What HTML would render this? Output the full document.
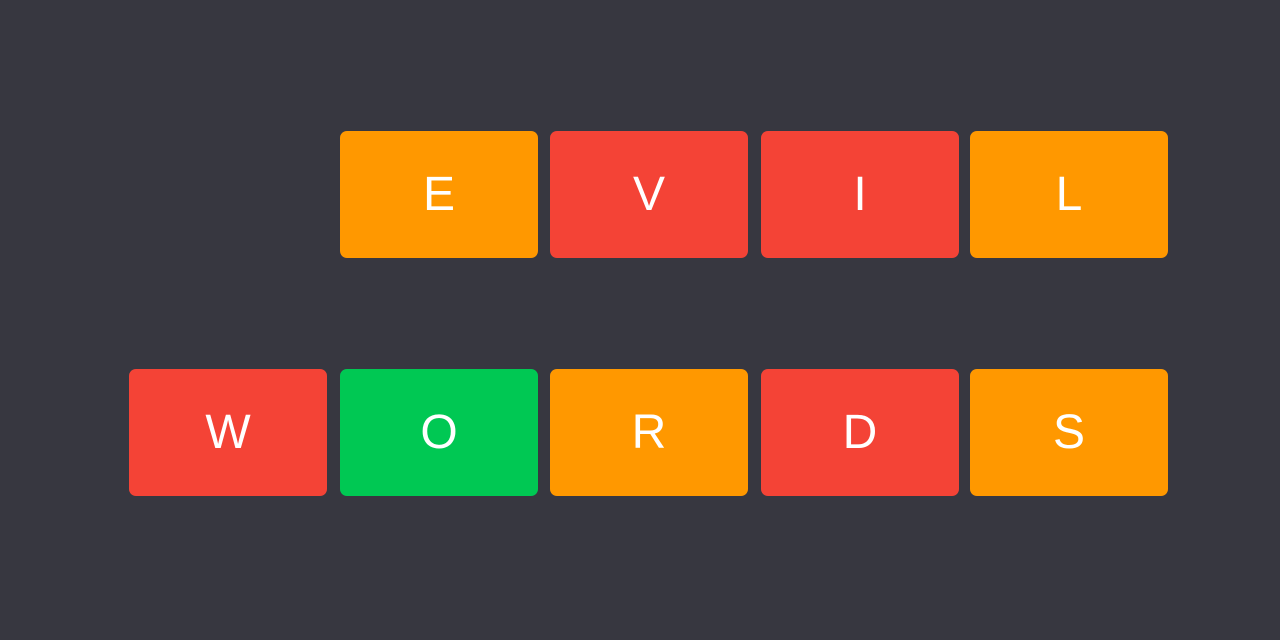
<!DOCTYPE html>
<html><head><style>
html,body{margin:0;padding:0;}
body{width:1280px;height:640px;background:#373740;position:relative;overflow:hidden;font-family:"Liberation Sans",sans-serif;}
.t{position:absolute;width:198px;height:127px;border-radius:7px;color:#fff;font-size:48px;line-height:127px;text-align:center;}
.o{background:#FF9800}.r{background:#F44336}.g{background:#00C853}
</style></head><body>
<div class="t o" style="left:340px;top:131px">E</div>
<div class="t r" style="left:550px;top:131px">V</div>
<div class="t r" style="left:761px;top:131px">I</div>
<div class="t o" style="left:970px;top:131px">L</div>
<div class="t r" style="left:129px;top:369px">W</div>
<div class="t g" style="left:340px;top:369px">O</div>
<div class="t o" style="left:550px;top:369px">R</div>
<div class="t r" style="left:761px;top:369px">D</div>
<div class="t o" style="left:970px;top:369px">S</div>
</body></html>
